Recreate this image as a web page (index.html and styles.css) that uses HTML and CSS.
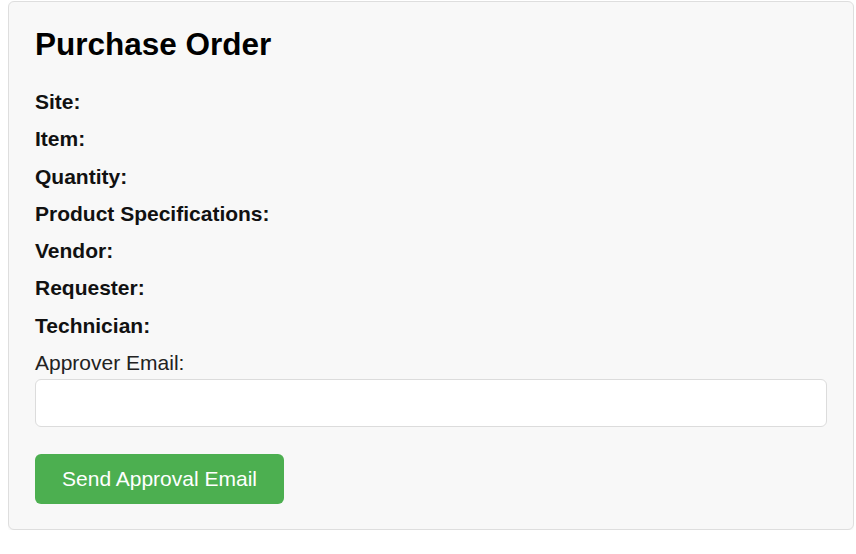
FILE: index.html
```html
<!DOCTYPE html>
<html lang="en">
<head>
<meta charset="utf-8">
<title>Purchase Order</title>
<link rel="stylesheet" href="styles.css">
</head>
<body>
<div class="card">
  <h2 class="title">Purchase Order</h2>
  <div class="fields">
    <p class="field"><strong>Site:</strong> <span class="value"></span></p>
    <p class="field"><strong>Item:</strong> <span class="value"></span></p>
    <p class="field"><strong>Quantity:</strong> <span class="value"></span></p>
    <p class="field"><strong>Product Specifications:</strong> <span class="value"></span></p>
    <p class="field"><strong>Vendor:</strong> <span class="value"></span></p>
    <p class="field"><strong>Requester:</strong> <span class="value"></span></p>
    <p class="field"><strong>Technician:</strong> <span class="value"></span></p>
    <label class="email-label" for="approverEmail">Approver Email:</label>
  </div>
  <input class="email-input" type="email" id="approverEmail">
  <button class="send-btn" type="button">Send Approval Email</button>
</div>
</body>
</html>
```
FILE: styles.css
```css
* { box-sizing: border-box; }

html, body {
  background: #ffffff;
}

body {
  margin: 1px 2px 0 8px;
  font-family: "Liberation Sans", Arial, sans-serif;
  color: #111;
}

.card {
  width: 846px;
  background: #f8f8f8;
  border: 1px solid #dedede;
  border-radius: 6px;
  padding: 26px 26px 25px 26px;
  box-shadow: 0 1px 3px rgba(0, 0, 0, 0.06);
}

.title {
  margin: 0 0 30px 0;
  font-size: 31.5px;
  line-height: 32px;
  font-weight: bold;
  color: #000;
}

.fields {
  display: flex;
  flex-direction: column;
  gap: 13.3px;
}

.field {
  margin: 0;
  font-size: 21px;
  line-height: 24px;
  color: #111;
}

.field strong {
  font-weight: bold;
}

.email-label {
  display: block;
  font-size: 21px;
  line-height: 24px;
  color: #222;
}

.email-input {
  display: block;
  width: 100%;
  height: 48px;
  margin: 4px 0 27px 0;
  background: #ffffff;
  border: 1px solid #dcdcdc;
  border-radius: 6px;
  font-family: "Liberation Sans", Arial, sans-serif;
  font-size: 21px;
  padding: 0 12px;
  outline: none;
}

.send-btn {
  display: block;
  width: 249px;
  height: 50px;
  padding: 0;
  background: #4caf50;
  color: #ffffff;
  border: none;
  border-radius: 6px;
  font-family: "Liberation Sans", Arial, sans-serif;
  font-size: 21px;
  line-height: 24px;
  cursor: pointer;
}
```
